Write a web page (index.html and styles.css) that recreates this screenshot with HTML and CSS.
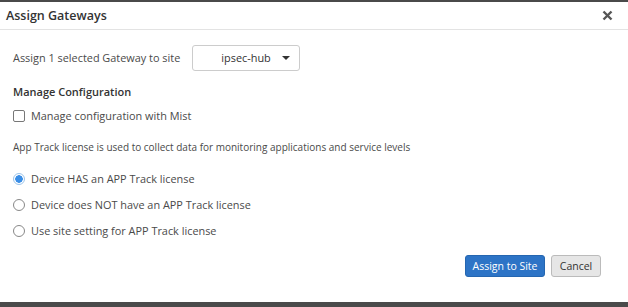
FILE: index.html
```html
<!DOCTYPE html>
<html lang="en">
<head>
    <meta charset="UTF-8">
    <title>Assign Gateways</title>
    <link rel="stylesheet" href="styles.css">
</head>
<body>
    <div class="dialog">
        <div class="dialog-header">
            <h3 class="dialog-title">Assign Gateways</h3>
            <svg class="close-btn" width="11" height="11" viewBox="0 0 11 11">
                <path d="M1.5 1.5 L9.5 9.5 M9.5 1.5 L1.5 9.5" stroke="#555" stroke-width="2.4"/>
            </svg>
        </div>
        <div class="dialog-body">
            <div class="site-row">
                <span>Assign 1 selected Gateway to site</span>
                <div class="site-select">
                    <span class="site-value">ipsec-hub</span>
                    <span class="caret"></span>
                </div>
            </div>
            <h4 class="section-title">Manage Configuration</h4>
            <label class="check-row"><span class="checkbox"></span>Manage configuration with Mist</label>
            <p class="note">App Track license is used to collect data for monitoring applications and service levels</p>
            <div class="radio-list">
                <label class="radio-row"><span class="radio checked"></span>Device HAS an APP Track license</label>
                <label class="radio-row"><span class="radio"></span>Device does NOT have an APP Track license</label>
                <label class="radio-row"><span class="radio"></span>Use site setting for APP Track license</label>
            </div>
            <div class="actions">
                <button class="btn btn-primary">Assign to Site</button>
                <button class="btn btn-default">Cancel</button>
            </div>
        </div>
    </div>
</body>
</html>
```
FILE: styles.css
```css
* {
    padding: 0;
    margin: 0;
    box-sizing: border-box;
    font-family: "Open Sans", Arial, sans-serif;
}
body {
    background: #4a4a4a;
    width: 628px;
    height: 307px;
    overflow: hidden;
}
.dialog {
    background: white;
    margin-top: 2px;
    height: 300px;
    color: #333;
}
.dialog-header {
    display: flex;
    justify-content: space-between;
    align-items: center;
    height: 28px;
    padding: 0 15px 0 6px;
    border-bottom: 1px solid #e3e3e3;
}
.dialog-title {
    font-size: 12.5px;
    font-weight: 600;
    color: #333;
}
.dialog-body {
    padding: 15px 13px 0 13px;
    font-size: 10.9px;
    line-height: 16px;
}
.site-row {
    display: flex;
    align-items: center;
    height: 26px;
    color: #4a4a4a;
}
.site-select {
    display: flex;
    align-items: center;
    justify-content: space-between;
    width: 108px;
    height: 26px;
    margin-left: 12px;
    padding: 0 9px 0 28px;
    border: 1px solid #ccc;
    border-radius: 3px;
    color: #333;
}
.caret {
    width: 0;
    height: 0;
    border-left: 4px solid transparent;
    border-right: 4px solid transparent;
    border-top: 4px solid #333;
}
.section-title {
    font-size: 11px;
    font-weight: 600;
    color: #333;
    margin-top: 13px;
}
.check-row, .radio-row {
    display: flex;
    align-items: center;
    color: #4a4a4a;
}
.check-row {
    margin-top: 8px;
}
.checkbox {
    width: 12px;
    height: 12px;
    border: 1px solid #777;
    border-radius: 2px;
    margin-right: 6px;
}
.note {
    font-size: 10px;
    color: #4a4a4a;
    margin-top: 15px;
}
.radio-list {
    display: flex;
    flex-direction: column;
    gap: 10px;
    margin-top: 16px;
}
.radio {
    width: 12px;
    height: 12px;
    border: 1px solid #888;
    border-radius: 50%;
    margin-right: 6px;
}
.radio.checked {
    border-color: #9cc4ea;
    background: radial-gradient(circle, #3a8ee6 0, #3a8ee6 3.5px, white 4px);
}
.actions {
    display: flex;
    justify-content: flex-end;
    gap: 6px;
    margin-top: 16px;
    padding-right: 14px;
}
.btn {
    height: 22px;
    font-size: 10.5px;
    border-radius: 3px;
}
.btn-primary {
    width: 80px;
    background: #2d74c6;
    border: 1px solid #2566b0;
    color: white;
}
.btn-default {
    width: 50px;
    background: #e6e6e6;
    border: 1px solid #bbb;
    color: #333;
}
```
